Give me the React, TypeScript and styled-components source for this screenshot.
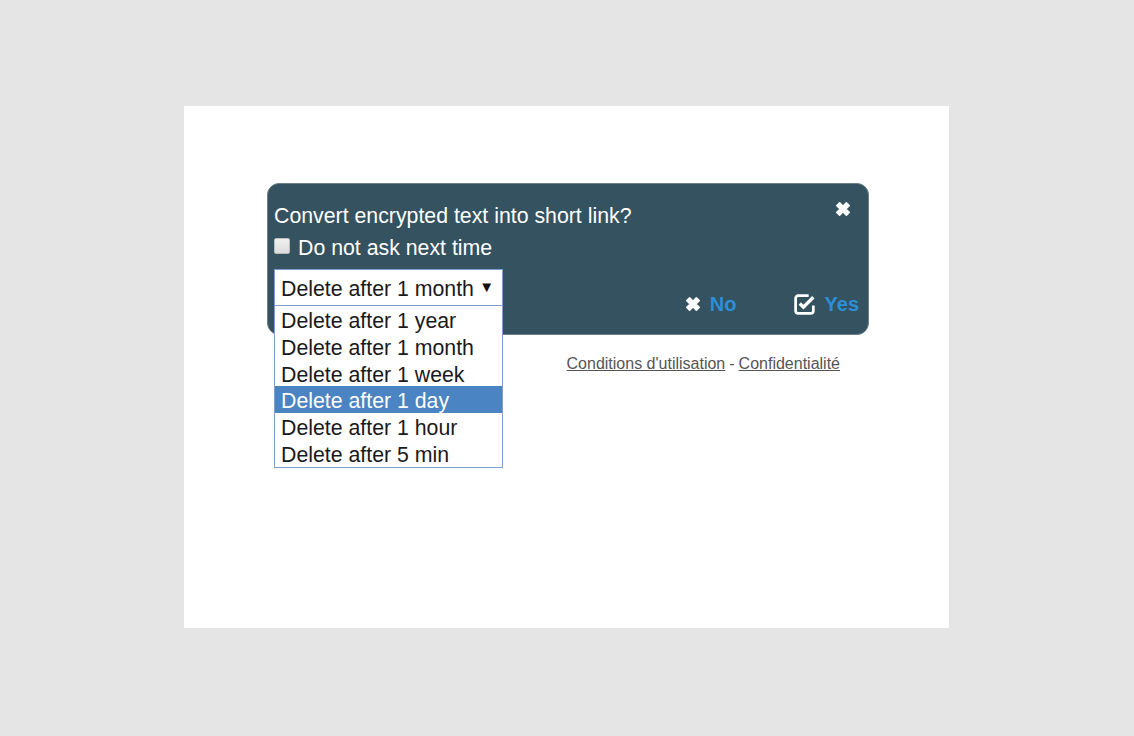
import styled, { createGlobalStyle } from "styled-components";

const Global = createGlobalStyle`
  html, body {
    margin: 0;
    padding: 0;
    background: #e5e5e5;
    font-family: "Liberation Sans", Arial, sans-serif;
  }
`;

const Page = styled.div`
  width: 1134px;
  height: 736px;
  padding: 106px 0 0 184px;
  box-sizing: border-box;
`;

const Card = styled.div`
  width: 765px;
  height: 522px;
  background: #ffffff;
  padding: 77px 80px 0 83px;
  box-sizing: border-box;
`;

const Dialog = styled.div`
  position: relative;
  width: 602px;
  height: 152px;
  box-sizing: border-box;
  background: #34525f;
  border: 1px solid #6f7f86;
  border-radius: 12px;
  padding: 18px 16px 0 6px;
  color: #ffffff;
  display: flex;
  flex-direction: column;
`;

const TopRow = styled.div`
  display: flex;
  justify-content: space-between;
  align-items: flex-start;
`;

const Title = styled.div`
  font-size: 21.3px;
  line-height: 28px;
`;

const Close = styled.button`
  background: none;
  border: 0;
  padding: 0;
  margin-top: -2px;
  cursor: pointer;
  display: flex;
`;

const CheckRow = styled.label`
  display: flex;
  align-items: center;
  gap: 8px;
  font-size: 21.3px;
  line-height: 26px;
  margin-top: 5px;
`;

const Box = styled.span`
  width: 16px;
  height: 16px;
  box-sizing: border-box;
  border-radius: 2px;
  background: linear-gradient(#f0f0f0, #dcdcdc);
  border: 1px solid #bcbcbc;
  margin-top: -5px;
`;

const BottomRow = styled.div`
  flex: 1;
  display: flex;
  justify-content: space-between;
  margin-top: 8px;
`;

const SelectWrap = styled.div`
  position: relative;
  width: 229px;
  align-self: flex-start;
`;

const SelectBox = styled.div`
  height: 37px;
  box-sizing: border-box;
  background: #ffffff;
  border: 1px solid #7f9fd0;
  color: #1a1a1a;
  font-size: 21.3px;
  display: flex;
  align-items: center;
  justify-content: space-between;
  padding: 3px 8px 0 6px;
`;

const Arrow = styled.span`
  font-size: 15px;
  color: #111;
  margin-top: -6px;
`;

const List = styled.ul`
  position: absolute;
  top: 37px;
  left: 0;
  width: 229px;
  box-sizing: border-box;
  margin: 0;
  padding: 0;
  list-style: none;
  background: #ffffff;
  border: 1px solid #7f9fd0;
  border-top: 0;
  z-index: 2;
`;

const Item = styled.li<{ $active?: boolean }>`
  height: 26.8px;
  line-height: 30px;
  padding-left: 6px;
  font-size: 21.3px;
  color: ${(p) => (p.$active ? "#ffffff" : "#1a1a1a")};
  background: ${(p) => (p.$active ? "#4a84c2" : "transparent")};
`;

const Actions = styled.div`
  align-self: flex-end;
  display: flex;
  align-items: center;
  gap: 56px;
  margin-bottom: 18px;
  margin-right: -7px;
`;

const Action = styled.button`
  background: none;
  border: 0;
  padding: 0;
  display: flex;
  align-items: center;
  gap: 8px;
  color: #2d8fd7;
  font-family: "Liberation Sans", Arial, sans-serif;
  font-weight: bold;
  font-size: 20px;
  cursor: pointer;
`;

const Footer = styled.div`
  display: flex;
  justify-content: flex-end;
  gap: 4px;
  padding-right: 29px;
  margin-top: 20px;
  font-size: 16px;
  color: #555;
`;

const FootLink = styled.a`
  color: #555;
  text-decoration: underline;
`;

function TimesIcon({ size }: { size: number }) {
  return (
    <svg width={size} height={size} viewBox="0 0 16 16">
      <path
        d="M2.5 5 L5 2.5 L8 5.5 L11 2.5 L13.5 5 L10.5 8 L13.5 11 L11 13.5 L8 10.5 L5 13.5 L2.5 11 L5.5 8 Z"
        fill="#ffffff"
        stroke="#ffffff"
        strokeWidth="1.4"
        strokeLinejoin="round"
      />
    </svg>
  );
}

function CheckSquareIcon() {
  return (
    <svg width="24" height="24" viewBox="0 0 23 23">
      <path
        d="M15 3.5 H5 a2.5 2.5 0 0 0 -2.5 2.5 V18 a2.5 2.5 0 0 0 2.5 2.5 H17 a2.5 2.5 0 0 0 2.5 -2.5 V13"
        fill="none"
        stroke="#ffffff"
        strokeWidth="2.6"
      />
      <path
        d="M6.5 11 L10 14.5 L19.5 5"
        fill="none"
        stroke="#ffffff"
        strokeWidth="3.2"
      />
    </svg>
  );
}

const options = [
  "Delete after 1 year",
  "Delete after 1 month",
  "Delete after 1 week",
  "Delete after 1 day",
  "Delete after 1 hour",
  "Delete after 5 min",
];

export default function App() {
  return (
    <>
      <Global />
      <Page>
        <Card>
          <Dialog>
            <TopRow>
              <Title>Convert encrypted text into short link?</Title>
              <Close>
                <TimesIcon size={18} />
              </Close>
            </TopRow>
            <CheckRow>
              <Box />
              Do not ask next time
            </CheckRow>
            <BottomRow>
              <SelectWrap>
                <SelectBox>
                  <span>Delete after 1 month</span>
                  <Arrow>▼</Arrow>
                </SelectBox>
                <List>
                  {options.map((o) => (
                    <Item key={o} $active={o === "Delete after 1 day"}>
                      {o}
                    </Item>
                  ))}
                </List>
              </SelectWrap>
              <Actions>
                <Action>
                  <TimesIcon size={18} />
                  No
                </Action>
                <Action>
                  <CheckSquareIcon />
                  Yes
                </Action>
              </Actions>
            </BottomRow>
          </Dialog>
          <Footer>
            <FootLink>Conditions d'utilisation</FootLink>-
            <FootLink>Confidentialité</FootLink>
          </Footer>
        </Card>
      </Page>
    </>
  );
}
